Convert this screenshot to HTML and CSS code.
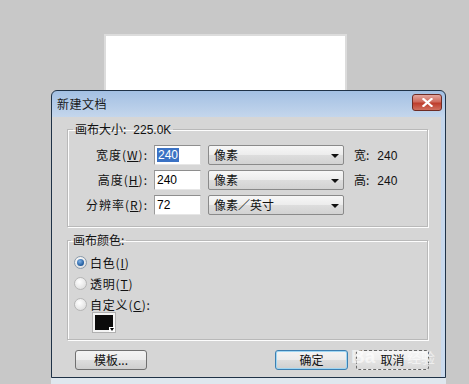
FILE: index.html
```html
<!DOCTYPE html>
<html lang="zh-CN">
<head>
<meta charset="utf-8">
<title>新建文档</title>
<link rel="stylesheet" href="styles.css">
</head>
<body>
<div class="desktop">
  <div class="canvas-win"></div>
  <div class="dialog">
    <div class="titlebar">
      <span class="title">新建文档</span>
      <span class="close">
        <svg width="11" height="9" viewBox="0 0 11 9"><path d="M1.5 1 L9.5 8 M9.5 1 L1.5 8" stroke="#fff" stroke-width="2.2" stroke-linecap="square" fill="none"/></svg>
      </span>
    </div>
    <div class="body">
      <fieldset class="group size">
        <legend>画布大小:<span class="num">225.0K</span></legend>
        <div class="rows">
          <div class="row">
            <span class="lbl">宽度(<u>W</u>):</span>
            <span class="input"><span class="hl">240</span></span>
            <span class="select">像素<i class="arrow"></i></span>
            <span class="info">宽:<span class="num">240</span></span>
          </div>
          <div class="row">
            <span class="lbl">高度(<u>H</u>):</span>
            <span class="input">240</span>
            <span class="select">像素<i class="arrow"></i></span>
            <span class="info">高:<span class="num">240</span></span>
          </div>
          <div class="row">
            <span class="lbl">分辨率(<u>R</u>):</span>
            <span class="input">72</span>
            <span class="select">像素／英寸<i class="arrow"></i></span>
          </div>
        </div>
      </fieldset>
      <fieldset class="group color">
        <legend>画布颜色:</legend>
        <div class="radios">
          <div class="radio-row"><span class="radio checked"></span><span class="rlabel">白色(<u>I</u>)</span></div>
          <div class="radio-row"><span class="radio"></span><span class="rlabel">透明(<u>T</u>)</span></div>
          <div class="radio-row"><span class="radio"></span><span class="rlabel">自定义(<u>C</u>):</span></div>
          <div class="swatch"><i class="sw-arrow"></i></div>
        </div>
      </fieldset>
      <div class="buttons">
        <span class="btn">模板...</span>
        <span class="btn default">确定</span>
        <span class="btn cancel">取消</span>
      </div>
    </div>
  </div>
  <div class="below"></div>
  <div class="watermark wm-en">Ba</div>
  <div class="watermark wm-cn">经验</div>
</div>
</body>
</html>
```

FILE: styles.css
```css
* { box-sizing: border-box; }

html, body {
  margin: 0;
  padding: 0;
}

body {
  width: 469px;
  height: 384px;
  overflow: hidden;
  background: #c8c8c8;
  font-family: "Noto Sans CJK SC", "Liberation Sans", sans-serif;
  font-size: 12px;
  color: #000;
}

.desktop {
  position: relative;
  width: 469px;
  height: 384px;
}

.canvas-win {
  position: absolute;
  left: 104px;
  top: 34px;
  width: 243px;
  height: 60px;
  background: #fff;
  border: 2px solid #dcdcdc;
}

.dialog {
  position: absolute;
  left: 51px;
  top: 90px;
  width: 395px;
  height: 288px;
  border: 1px solid #1f3247;
  border-radius: 6px 6px 0 0;
  background: linear-gradient(#a3c0e3, #c4d6ec 26px, #cbdbee);
  display: flex;
  flex-direction: column;
}

.titlebar {
  height: 26px;
  flex: none;
  display: flex;
  align-items: flex-start;
  justify-content: space-between;
  padding: 0 3px 0 5px;
}

.title {
  line-height: 26px;
  font-size: 12px;
  color: #1a1a1a;
  letter-spacing: 0.5px;
}

.close {
  margin-top: 3px;
  width: 30px;
  height: 17px;
  border: 1px solid #6e2b24;
  border-radius: 3px;
  background: linear-gradient(#e3a69e, #cf6a5c 45%, #be3d2c 55%, #d0705f);
  display: flex;
  align-items: center;
  justify-content: center;
}

.body {
  flex: 1;
  background: #d6d6d6;
  margin-right: 4px;
  padding: 4px 12px 0 15px;
}

.group {
  margin: 0;
  padding: 0;
  border: 1px solid #b9b9b9;
  box-shadow: 1px 1px 0 #fdfdfd, inset 1px 1px 0 #fdfdfd;
  width: 361px;
  min-width: 0;
}

.group legend {
  margin-left: 5px;
  padding: 0 2px;
  line-height: 16px;
  height: 16px;
  font-size: 12px;
  color: #111;
}

.group.color legend {
  margin-left: 3px;
}

.num {
  font-family: "Liberation Sans", sans-serif;
  margin-left: 7px;
}

.rows {
  padding: 8px 0 11px 1px;
  display: flex;
  flex-direction: column;
  gap: 5px;
}

.row {
  display: flex;
  align-items: center;
  height: 20px;
}

.lbl {
  width: 79px;
  text-align: right;
  line-height: 20px;
  color: #111;
  letter-spacing: 1px;
}

.input {
  margin-left: 6px;
  width: 47px;
  height: 20px;
  background: #fff;
  border: 1px solid #a8a8a8;
  border-color: #8e8e8e #d8d8d8 #e6e6e6 #9a9a9a;
  padding: 0 0 0 2px;
  line-height: 17px;
  font-family: "Liberation Sans", "DejaVu Sans", sans-serif;
  font-size: 12px;
  display: flex;
  align-items: center;
}

.hl {
  background: #3b72c4;
  color: #fff;
  padding: 0 1px;
  line-height: 14px;
}

.select {
  margin-left: 7px;
  width: 136px;
  height: 20px;
  border: 1px solid #8a8a8a;
  border-radius: 2px;
  background: linear-gradient(#f7f7f7, #ececec 50%, #dddddd 51%, #d2d2d2);
  padding-left: 5px;
  line-height: 18px;
  position: relative;
  color: #111;
}

.arrow {
  position: absolute;
  right: 4px;
  top: 8px;
  width: 0;
  height: 0;
  border-left: 4px solid transparent;
  border-right: 4px solid transparent;
  border-top: 4px solid #111;
}

.info {
  margin-left: 10px;
  line-height: 20px;
  color: #111;
}

.info .num {
  margin-left: 8px;
}

.group.color {
  margin-top: 5px;
}

.radios {
  padding: 4px 0 7px 6px;
  display: flex;
  flex-direction: column;
}

.radio-row {
  display: flex;
  align-items: center;
  height: 21px;
  gap: 3px;
  color: #111;
}

.rlabel {
  letter-spacing: 0.8px;
}

.radio {
  width: 13px;
  height: 13px;
  border-radius: 50%;
  border: 1px solid #b5b5b5;
  background: radial-gradient(circle at 40% 35%, #ffffff, #e3e3e3 70%, #d0d0d0);
  position: relative;
}

.radio.checked {
  border-color: #8a9aaa;
}

.radio.checked::after {
  content: "";
  position: absolute;
  left: 2px;
  top: 2px;
  width: 7px;
  height: 7px;
  border-radius: 50%;
  background: radial-gradient(circle at 40% 35%, #7fb1e6, #1f5a9c 70%);
}

.swatch {
  margin: -2px 0 0 19px;
  width: 22px;
  height: 19px;
  background: #0b0b0b;
  border: 2px solid #f4f4f4;
  box-shadow: 0 0 0 1px #b0b0b0;
  position: relative;
}

.sw-arrow {
  position: absolute;
  right: -2px;
  bottom: -2px;
  width: 6px;
  height: 5px;
  background: #fff;
}

.sw-arrow::after {
  content: "";
  position: absolute;
  left: 1px;
  top: 1px;
  border-left: 2px solid transparent;
  border-right: 2px solid transparent;
  border-top: 3px solid #000;
}

.buttons {
  display: flex;
  align-items: center;
  margin-top: 10px;
  padding-left: 8px;
}

.btn {
  width: 72px;
  height: 20px;
  border: 1px solid #707070;
  border-radius: 3px;
  background: linear-gradient(#f3f3f3, #ebebeb 50%, #dddddd 51%, #cfcfcf);
  text-align: center;
  line-height: 18px;
  color: #111;
}

.btn.default {
  margin-left: auto;
  width: 73px;
  border-color: #3c7fb1;
  box-shadow: inset 0 0 0 1px #9fd6f3;
}

.btn.cancel {
  margin-left: 8px;
  width: 73px;
  border-style: dashed;
  border-color: #666;
  background: linear-gradient(#f6f6f6, #eeeeee 50%, #e4e4e4 51%, #dadada);
}

.below {
  position: absolute;
  left: 51px;
  top: 378px;
  width: 395px;
  height: 6px;
  background: #dfe7ee;
}

.watermark {
  position: absolute;
  color: rgba(255, 255, 255, 0.6);
}

.wm-en {
  left: 351px;
  top: 345px;
  font-family: "Liberation Sans", sans-serif;
  font-weight: bold;
  font-size: 19px;
  line-height: 24px;
}

.wm-cn {
  left: 407px;
  top: 347px;
  font-family: "Noto Sans CJK SC", sans-serif;
  font-size: 14px;
  line-height: 20px;
}
```
